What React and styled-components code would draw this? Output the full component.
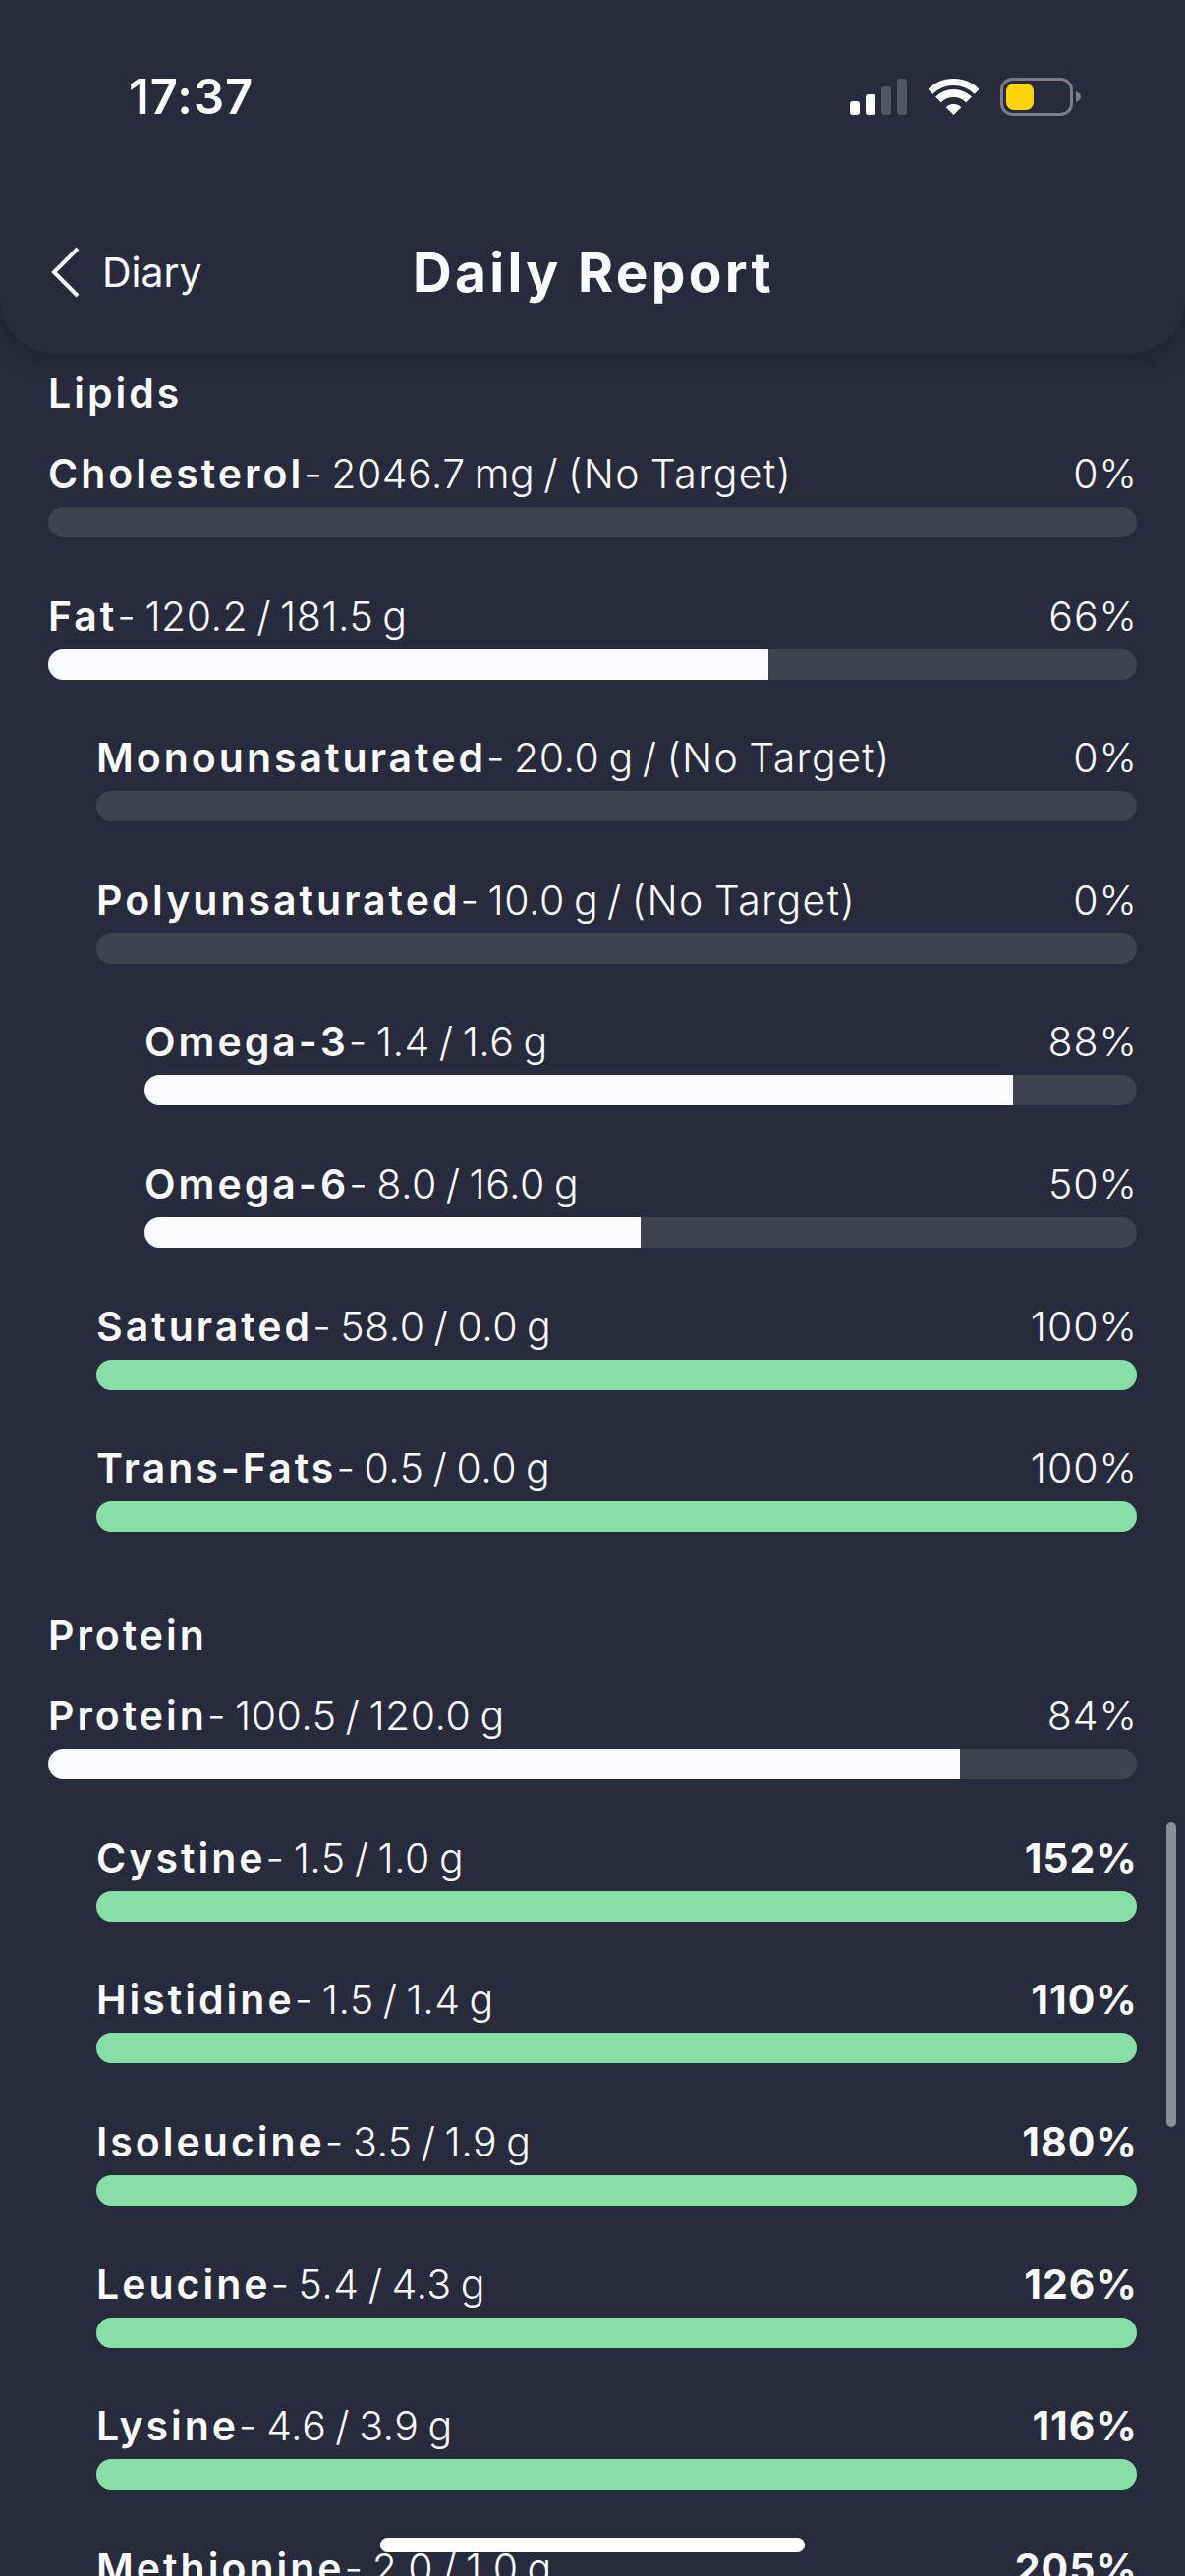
import React from "react";
import styled, { createGlobalStyle } from "styled-components";

const GlobalStyle = createGlobalStyle`
  html, body {
    margin: 0;
    padding: 0;
    background: #282b3c;
  }
  * {
    box-sizing: border-box;
  }
`;

const Screen = styled.div`
  position: relative;
  width: 1206px;
  height: 2622px;
  overflow: hidden;
  background: #282b3c;
  color: #fafbff;
  font-family: Inter, "Noto Sans", sans-serif;
`;

const Header = styled.header`
  position: relative;
  z-index: 1;
  height: 360px;
  padding: 0 49px;
  background: #282b3c;
  border-radius: 0 0 56px 56px;
  box-shadow: 0 6px 24px rgba(20, 22, 34, 0.45);
`;

const StatusBar = styled.div`
  display: flex;
  align-items: center;
  justify-content: space-between;
  height: 40px;
  padding: 0 57px 0 82px;
  transform: translateY(78px);
`;

const Clock = styled.span`
  font-size: 49px;
  font-weight: 600;
  letter-spacing: 1px;
  color: #ffffff;
`;

const StatusIcons = styled.div`
  display: flex;
  align-items: center;
  gap: 22px;
`;

const NavRow = styled.div`
  display: grid;
  grid-template-columns: 1fr auto 1fr;
  align-items: center;
  height: 70px;
  margin-top: 202px;
  margin-left: 2px;
`;

const BackLink = styled.div`
  display: flex;
  align-items: center;
  gap: 21px;
  font-size: 41px;
  font-weight: 400;
`;

const Title = styled.h1`
  margin: 0;
  font-size: 55px;
  font-weight: 700;
  letter-spacing: 3.3px;
`;

const Content = styled.main`
  padding: 12px 49px 0;
`;

const SectionTitle = styled.h2`
  margin: 0 0 26px;
  font-size: 41px;
  line-height: 56px;
  font-weight: 600;
  letter-spacing: 3px;
`;

const Section = styled.section`
  margin-bottom: 77px;
`;

const Row = styled.div`
  padding-left: ${(p) => p.$level * 49}px;
  margin-bottom: 51.6px;
`;

const RowHead = styled.div`
  display: flex;
  justify-content: space-between;
  align-items: baseline;
  height: 56px;
  line-height: 56px;
  margin-bottom: 6px;
  font-size: 41px;
`;

const Label = styled.div`
  white-space: nowrap;
`;

const Name = styled.span`
  font-weight: 600;
  letter-spacing: 3px;
`;

const Amount = styled.span`
  font-weight: 300;
  letter-spacing: 0.5px;
  word-spacing: -3px;
`;

const NoTarget = styled.span`
  letter-spacing: 1.4px;
`;

const Percent = styled.span`
  margin-right: -1px;
  font-weight: ${(p) => (p.$over ? 700 : 300)};
  letter-spacing: 1px;
`;

const Track = styled.div`
  height: 31px;
  border-radius: 15.5px;
  overflow: hidden;
  background: #41424f;
`;

const Fill = styled.div`
  height: 100%;
  background: ${(p) => (p.$done ? "#87dfa5" : "#fafbff")};
`;

const ScrollThumb = styled.div`
  position: absolute;
  top: 1855px;
  right: 9px;
  width: 10px;
  height: 310px;
  border-radius: 5px;
  background: #8e8f98;
`;

const HomeIndicator = styled.div`
  position: absolute;
  z-index: 2;
  left: 387px;
  bottom: 24px;
  width: 432px;
  height: 15px;
  border-radius: 8px;
  background: #ffffff;
`;

const SignalIcon = () => (
  <svg width="58" height="37" viewBox="0 0 58 37">
    <rect x="0" y="23" width="10" height="14" rx="3" fill="#fff" />
    <rect x="16" y="16" width="10" height="21" rx="3" fill="#fff" />
    <rect x="32" y="8" width="10" height="29" rx="3" fill="#545663" />
    <rect x="48" y="0" width="10" height="37" rx="3" fill="#545663" />
  </svg>
);

const WifiIcon = () => (
  <svg width="51" height="37" viewBox="0 0 51 37">
    <path d="M1.8 13.3 A33.5 33.5 0 0 1 49.2 13.3" fill="none" stroke="#fff" strokeWidth="7" />
    <path d="M9.9 21.4 A22 22 0 0 1 41.1 21.4" fill="none" stroke="#fff" strokeWidth="8" />
    <path d="M17.7 29.2 A11 11 0 0 1 33.3 29.2 L25.5 37 Z" fill="#fff" />
  </svg>
);

const BatteryIcon = () => (
  <svg width="82" height="39" viewBox="0 0 82 39">
    <rect x="1.5" y="1.5" width="71" height="36" rx="11" fill="none" stroke="#7c7d88" strokeWidth="3" />
    <rect x="6" y="6" width="28" height="27" rx="8" fill="#ffd60a" />
    <path d="M77 14 C80 15 82 17 82 19.5 C82 22 80 24 77 25 Z" fill="#7c7d88" />
  </svg>
);

const BackChevron = () => (
  <svg width="32" height="52" viewBox="0 0 32 52">
    <path d="M28 2 L4 26 L28 50" fill="none" stroke="#fafbff" strokeWidth="4" />
  </svg>
);

const sections = [
  {
    title: "Lipids",
    rows: [
      { name: "Cholesterol", amount: "2046.7 mg /", noTarget: true, pct: 0, level: 0 },
      { name: "Fat", amount: "120.2 / 181.5 g", pct: 66, fill: 66.2, level: 0 },
      { name: "Monounsaturated", amount: "20.0 g /", noTarget: true, pct: 0, level: 1 },
      { name: "Polyunsaturated", amount: "10.0 g /", noTarget: true, pct: 0, level: 1 },
      { name: "Omega-3", amount: "1.4 / 1.6 g", pct: 88, fill: 87.5, level: 2 },
      { name: "Omega-6", amount: "8.0 / 16.0 g", pct: 50, level: 2 },
      { name: "Saturated", amount: "58.0 / 0.0 g", pct: 100, level: 1 },
      { name: "Trans-Fats", amount: "0.5 / 0.0 g", pct: 100, level: 1 },
    ],
  },
  {
    title: "Protein",
    rows: [
      { name: "Protein", amount: "100.5 / 120.0 g", pct: 84, fill: 83.75, level: 0 },
      { name: "Cystine", amount: "1.5 / 1.0 g", pct: 152, level: 1 },
      { name: "Histidine", amount: "1.5 / 1.4 g", pct: 110, level: 1 },
      { name: "Isoleucine", amount: "3.5 / 1.9 g", pct: 180, level: 1 },
      { name: "Leucine", amount: "5.4 / 4.3 g", pct: 126, level: 1 },
      { name: "Lysine", amount: "4.6 / 3.9 g", pct: 116, level: 1 },
      { name: "Methionine", amount: "2.0 / 1.0 g", pct: 205, level: 1 },
    ],
  },
];

const NutrientRow = ({ name, amount, noTarget, pct, fill, level }) => (
  <Row $level={level}>
    <RowHead>
      <Label>
        <Name>{name}</Name>
        <Amount>
          - {amount}
          {noTarget && <NoTarget> (No Target)</NoTarget>}
        </Amount>
      </Label>
      <Percent $over={pct > 100}>{pct}%</Percent>
    </RowHead>
    <Track>
      <Fill $done={pct >= 100} style={{ width: `${Math.min(fill ?? pct, 100)}%` }} />
    </Track>
  </Row>
);

export default function App() {
  return (
    <>
      <GlobalStyle />
      <Screen>
        <Header>
          <StatusBar>
            <Clock>17:37</Clock>
            <StatusIcons>
              <SignalIcon />
              <WifiIcon />
              <BatteryIcon />
            </StatusIcons>
          </StatusBar>
          <NavRow>
            <BackLink>
              <BackChevron />
              Diary
            </BackLink>
            <Title>Daily Report</Title>
            <span />
          </NavRow>
        </Header>
        <Content>
          {sections.map((section) => (
            <Section key={section.title}>
              <SectionTitle>{section.title}</SectionTitle>
              {section.rows.map((row) => (
                <NutrientRow key={row.name} {...row} />
              ))}
            </Section>
          ))}
        </Content>
        <ScrollThumb />
        <HomeIndicator />
      </Screen>
    </>
  );
}
